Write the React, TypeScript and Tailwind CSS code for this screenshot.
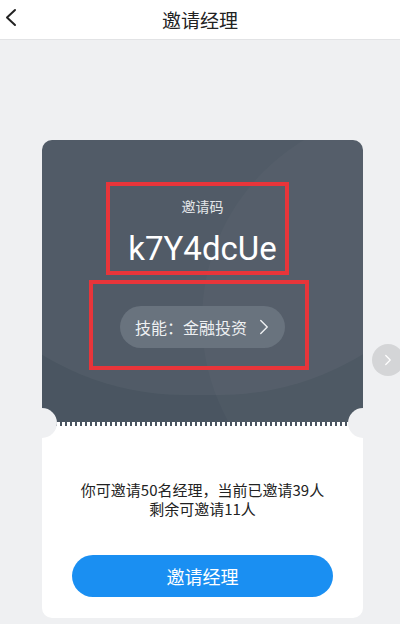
import { ChevronRight } from "lucide-react";

const cjk = { fontFamily: '"Noto Sans CJK SC", "Noto Sans", sans-serif' };

export default function App() {
    return (
        <div className="w-[400px] h-[624px] bg-[#eff0f2] overflow-hidden relative" style={cjk}>
            {/* Header */}
            <div className="h-[40px] bg-white border-b border-[#e2e3e5] flex items-center relative">
                <svg className="absolute left-0 top-0" width="24" height="36" viewBox="0 0 24 36" fill="none">
                    <polyline points="15,10 7,17.5 15,25" stroke="#222" strokeWidth="2" strokeLinecap="round" strokeLinejoin="round" />
                </svg>
                <h1 className="flex-1 text-center text-[19px] text-[#222] leading-none">邀请经理</h1>
            </div>

            {/* Ticket card */}
            <div className="mt-[100px] ml-[42px] w-[321px] relative">
                <div className="h-[282px] bg-[#4a5561] rounded-t-[10px] overflow-hidden relative flex flex-col items-center pt-[42px]">
                    <div className="absolute -left-[130px] -top-[290px] w-[580px] h-[545px] rounded-full bg-white/[0.04]" />
                    <div className="absolute left-[160px] -top-[30px] w-[420px] h-[420px] rounded-full bg-white/[0.025]" />

                    <div className="relative mr-[10px] w-[183px] h-[93px] border-4 border-[#e8353a] flex flex-col items-center pt-[11px]">
                        <span className="text-[14px] text-[#e3e6e9] leading-[18px] ml-[10px]">邀请码</span>
                        <span
                            className="text-[33px] text-white leading-[40px] mt-[14px] ml-[10px]"
                            style={{ fontFamily: 'Roboto, "DejaVu Sans", sans-serif' }}
                        >
                            k7Y4dcUe
                        </span>
                    </div>

                    <div className="relative mt-[5px] mr-[7px] w-[220px] h-[90px] border-4 border-[#e8353a] flex items-center justify-center pt-[3px] pl-[7px]">
                        <div className="h-[42px] w-[165px] rounded-full bg-[#69737e] flex items-center pl-[15px] pr-[8px]">
                            <span className="text-[16px] text-[#eef0f2] flex-1">技能：金融投资</span>
                            <ChevronRight className="text-[#eef0f2]" size={26} strokeWidth={1.3} />
                        </div>
                    </div>
                </div>

                {/* perforation */}
                <div
                    className="h-[4px] bg-[#4a5561]"
                    style={{ backgroundImage: "repeating-linear-gradient(90deg, #ffffff 0 3px, transparent 3px 5px)" }}
                />

                <div className="h-[192px] bg-white rounded-b-[10px] flex flex-col items-center pt-[54px]">
                    <p className="text-[15px] text-[#222] leading-[19px] text-center">
                        你可邀请50名经理，当前已邀请39人
                        <br />
                        剩余可邀请11人
                    </p>
                    <button className="mt-[37px] w-[261px] h-[42px] rounded-full bg-[#1a8ff2] text-white text-[18px]">
                        邀请经理
                    </button>
                </div>

                {/* notches */}
                <div className="absolute -left-[15px] top-[268px] w-[30px] h-[30px] rounded-full bg-[#eff0f2]" />
                <div className="absolute -right-[15px] top-[268px] w-[30px] h-[30px] rounded-full bg-[#eff0f2]" />
            </div>

            {/* next arrow */}
            <div className="absolute left-[372px] top-[344px] w-[32px] h-[32px] rounded-full bg-[#d4d5d7] flex items-center justify-center">
                <ChevronRight className="text-white" size={18} strokeWidth={1.6} />
            </div>
        </div>
    );
}
